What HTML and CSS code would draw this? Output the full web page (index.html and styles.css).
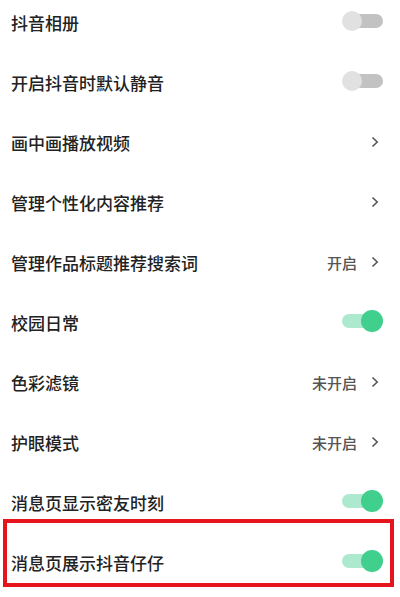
FILE: index.html
```
<!DOCTYPE html>
<html lang="zh-CN">
<head>
<meta charset="utf-8">
<link rel="stylesheet" href="styles.css">
</head>
<body>
<div class="list">
  <div class="row"><span class="label">抖音相册</span><span class="switch"></span></div>
  <div class="row"><span class="label">开启抖音时默认静音</span><span class="switch"></span></div>
  <div class="row"><span class="label">画中画播放视频</span><span class="right"><svg class="chev" viewBox="0 0 8 12" width="8" height="12"><path d="M1.5 1.5 L6.2 6 L1.5 10.5" fill="none" stroke="#555" stroke-width="1.6"/></svg></span></div>
  <div class="row"><span class="label">管理个性化内容推荐</span><span class="right"><svg class="chev" viewBox="0 0 8 12" width="8" height="12"><path d="M1.5 1.5 L6.2 6 L1.5 10.5" fill="none" stroke="#555" stroke-width="1.6"/></svg></span></div>
  <div class="row"><span class="label">管理作品标题推荐搜索词</span><span class="right"><span class="value">开启</span><svg class="chev" viewBox="0 0 8 12" width="8" height="12"><path d="M1.5 1.5 L6.2 6 L1.5 10.5" fill="none" stroke="#555" stroke-width="1.6"/></svg></span></div>
  <div class="row"><span class="label">校园日常</span><span class="switch on"></span></div>
  <div class="row"><span class="label">色彩滤镜</span><span class="right"><span class="value">未开启</span><svg class="chev" viewBox="0 0 8 12" width="8" height="12"><path d="M1.5 1.5 L6.2 6 L1.5 10.5" fill="none" stroke="#555" stroke-width="1.6"/></svg></span></div>
  <div class="row"><span class="label">护眼模式</span><span class="right"><span class="value">未开启</span><svg class="chev" viewBox="0 0 8 12" width="8" height="12"><path d="M1.5 1.5 L6.2 6 L1.5 10.5" fill="none" stroke="#555" stroke-width="1.6"/></svg></span></div>
  <div class="row"><span class="label">消息页显示密友时刻</span><span class="switch on"></span></div>
  <div class="row highlighted"><span class="label">消息页展示抖音仔仔</span><span class="switch on"></span><span class="mark"></span></div>
</div>
</body>
</html>
```
FILE: styles.css
```
html, body {
  margin: 0;
  padding: 0;
  background: #ffffff;
  overflow: hidden;
}
body {
  width: 400px;
  height: 597px;
  font-family: "Noto Sans CJK SC", "Noto Sans", sans-serif;
  color: #222222;
}
.list {
  margin-top: -8px;
}
.row {
  position: relative;
  height: 60px;
  display: flex;
  align-items: center;
  justify-content: space-between;
  padding: 0 17px 0 11px;
}
.label {
  font-size: 17px;
  font-weight: 500;
  line-height: 1;
  padding-top: 0;
}
.right {
  display: flex;
  align-items: center;
  gap: 14px;
  padding-right: 4px;
  padding-top: 0;
}
.value {
  font-size: 15px;
  color: #555555;
  font-weight: 500;
}
.chev {
  display: block;
}
.switch {
  position: relative;
  width: 41px;
  height: 22px;
  margin-top: -3px;
}
.switch::before {
  content: "";
  position: absolute;
  left: 8px;
  right: 0;
  top: 4px;
  height: 14px;
  border-radius: 7px;
  background: #c2c2c2;
}
.switch::after {
  content: "";
  position: absolute;
  left: 0;
  top: 1px;
  width: 20px;
  height: 20px;
  border-radius: 50%;
  background: #e1e1e1;
}
.switch.on::before {
  left: 0;
  right: 8px;
  background: #ade9cf;
}
.switch.on::after {
  left: auto;
  right: 0;
  top: 0;
  width: 22px;
  height: 22px;
  background: #40cf8c;
}
.mark {
  position: absolute;
  left: 3px;
  top: -13px;
  width: 383px;
  height: 60px;
  border: 4px solid #e5141d;
}
```
